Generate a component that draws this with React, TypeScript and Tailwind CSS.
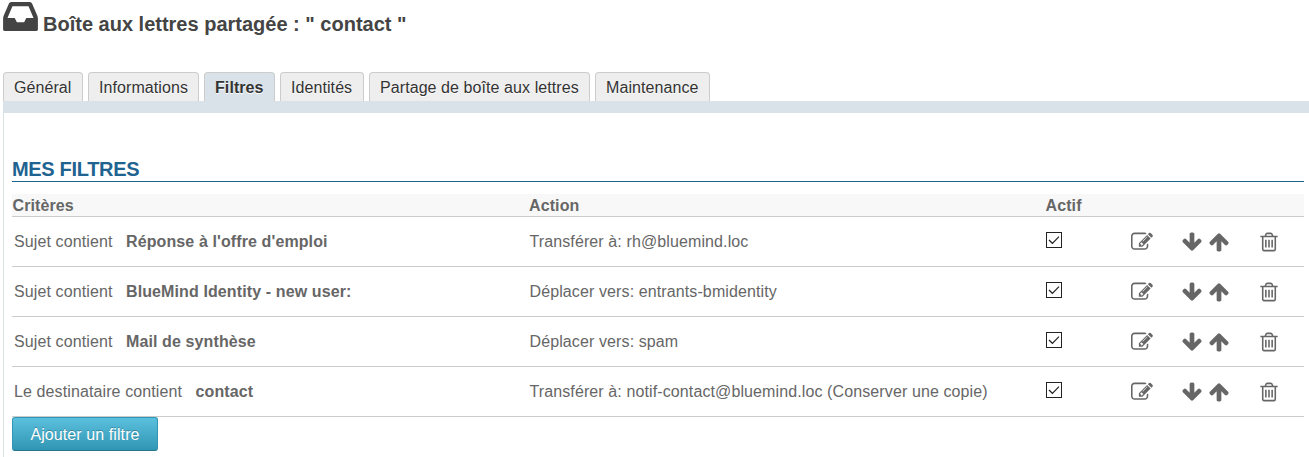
const PATHS = {
  edit: 'M888 1184l116-116-152-152-116 116v56h96v96h56zm440-720q-16-16-33 1l-350 350q-17 17-1 33t33-1l350-350q17-17 1-33zm80 594v190q0 119-84.5 203.5t-203.5 84.5h-832q-119 0-203.5-84.5t-84.5-203.5v-832q0-119 84.5-203.5t203.5-84.5h832q63 0 117 25 15 7 18 23 3 17-9 29l-49 49q-14 14-32 8-23-6-45-6h-832q-66 0-113 47t-47 113v832q0 66 47 113t113 47h832q66 0 113-47t47-113v-126q0-13 9-22l64-64q15-15 35-7t20 29zm-96-738l288 288-672 672h-288v-288zm444 132l-92 92-288-288 92-92q28-28 68-28t68 28l152 152q28 28 28 68t-28 68z',
  arrow: 'M1675 971q0 51-37 90l-75 75q-38 38-91 38-54 0-90-38l-294-293v704q0 52-37.5 84.5t-90.5 32.5h-128q-53 0-90.5-32.5t-37.5-84.5v-704l-294 293q-36 38-90 38t-90-38l-75-75q-38-38-38-90 0-53 38-91l651-651q35-37 90-37 54 0 91 37l651 651q37 39 37 91z',
  trash: 'M704 736v576q0 14-9 23t-23 9h-64q-14 0-23-9t-9-23v-576q0-14 9-23t23-9h64q14 0 23 9t9 23zm256 0v576q0 14-9 23t-23 9h-64q-14 0-23-9t-9-23v-576q0-14 9-23t23-9h64q14 0 23 9t9 23zm256 0v576q0 14-9 23t-23 9h-64q-14 0-23-9t-9-23v-576q0-14 9-23t23-9h64q14 0 23 9t9 23zm128 724v-948h-896v948q0 22 7 40.5t14.5 27 10.5 8.5h832q3 0 10.5-8.5t14.5-27 7-40.5zm-672-1076h448l-48-117q-7-9-17-11h-317q-10 2-17 11zm928 32v64q0 14-9 23t-23 9h-96v948q0 83-47 143.5t-113 60.5h-832q-66 0-113-58.5t-47-141.5v-952h-96q-14 0-23-9t-9-23v-64q0-14 9-23t23-9h309l70-167q15-37 54-63t79-26h320q40 0 79 26t54 63l70 167h309q14 0 23 9t9 23z',
  inbox: 'M1023 832h316q-1-3-2.5-8.5t-2.5-8.5l-212-496h-708l-212 496q-1 3-2.5 8.5t-2.5 8.5h316l95 192h320zm513 30v482q0 26-19 45t-45 19h-1408q-26 0-45-19t-19-45v-482q0-62 25-123l238-552q10-25 36.5-42t52.5-17h832q26 0 52.5 17t36.5 42l238 552q25 61 25 123z',
};

function Icon({ path, className }: { path: string; className: string }) {
  return (
    <svg viewBox="0 0 1792 1792" fill="currentColor" className={`size-[22px] shrink-0 ${className}`}>
      <path d={path} />
    </svg>
  );
}

const TABS = [
  { label: 'Général', width: 'w-[80px]' },
  { label: 'Informations', width: 'w-[111px]' },
  { label: 'Filtres', width: 'w-[71px]' },
  { label: 'Identités', width: 'w-[84px]' },
  { label: 'Partage de boîte aux lettres', width: 'w-[221px]' },
  { label: 'Maintenance', width: 'w-[115px]' },
];

const FILTERS = [
  { field: 'Sujet contient', value: "Réponse à l'offre d'emploi", action: 'Transférer à: rh@bluemind.loc' },
  { field: 'Sujet contient', value: 'BlueMind Identity - new user:', action: 'Déplacer vers: entrants-bmidentity' },
  { field: 'Sujet contient', value: 'Mail de synthèse', action: 'Déplacer vers: spam' },
  { field: 'Le destinataire contient', value: 'contact', action: 'Transférer à: notif-contact@bluemind.loc (Conserver une copie)' },
];

export default function App() {
  return (
    <div className="h-[457px] overflow-hidden bg-white pl-[3px] font-['Liberation_Sans',Arial,sans-serif] text-base text-[#666]">
      <header className="flex h-[72px] text-[#444]">
        <svg viewBox="0 128 1536 1280" fill="currentColor" className="mt-[2px] h-[29px] w-[35px]">
          <path d={PATHS.inbox} />
        </svg>
        <h1 className="ml-[5px] mt-[9px] text-[20px] leading-[30px] font-bold whitespace-pre">Boîte aux lettres partagée : " contact "</h1>
      </header>

      <nav className="flex h-[29px] gap-[5px]">
        {TABS.map(({ label, width }) => (
          <button
            key={label}
            className={`h-[29px] rounded-t border border-b-0 border-[#ccc] pt-px pl-[10px] text-left leading-[28px] tracking-[0.08px] whitespace-nowrap text-[#333] [text-shadow:0_1px_0_#fff] ${width} ${
              label === 'Filtres' ? 'bg-[#d9e2e9] font-bold' : 'bg-[#eee]'
            }`}
          >
            {label}
          </button>
        ))}
      </nav>
      <div className="h-3 bg-[#d9e2e9]" />

      <main className="h-[344px] border-l border-[#d9e2e2] pt-[43px] pr-[5px] pl-2">
        <h2 className="h-[26px] border-b border-[#1f6391] text-[20px] leading-[26px] font-bold tracking-[-0.32px] text-[#1f6391]">MES FILTRES</h2>
        <div className="mt-3 grid h-[23px] grid-cols-[516.5px_516.5px_1fr] border-b border-[#ccc] bg-[#f8f8f8] pl-[0.5px] leading-[23px] font-bold tracking-[0.1px]">
          <span>Critères</span>
          <span>Action</span>
          <span>Actif</span>
        </div>
        {FILTERS.map((filter) => (
          <div key={filter.value} className="grid h-[50px] grid-cols-[515.5px_516.5px_1fr] items-center border-b border-[#ccc] pl-[2px] tracking-[0.11px]">
            <div className="flex gap-[13.5px] whitespace-nowrap">
              <span>{filter.field}</span>
              <b>{filter.value}</b>
            </div>
            <span className="whitespace-nowrap">{filter.action}</span>
            <div className="flex items-center">
              <span className="-mt-[3px] flex size-4 items-center justify-center border border-[#222] bg-white">
                <svg viewBox="0 0 14 14" className="size-[14px]" fill="none" stroke="#222" strokeWidth="1.2">
                  <path d="M2 7l3.4 3.3 6.6-6.6" />
                </svg>
              </span>
              <Icon path={PATHS.edit} className="ml-[69px]" />
              <Icon path={PATHS.arrow} className="ml-7 rotate-180" />
              <Icon path={PATHS.arrow} className="ml-[4.5px]" />
              <Icon path={PATHS.trash} className="ml-[28.5px]" />
            </div>
          </div>
        ))}
        <button className="h-[34px] w-[146px] rounded-[3px] border border-[#2f96b4] border-b-[#24748c] bg-linear-to-b from-[#5bc0de] to-[#2f96b4] pt-[2px] tracking-[0.09px] text-white [text-shadow:0_-1px_0_rgba(0,0,0,0.25)]">
          Ajouter un filtre
        </button>
      </main>
    </div>
  );
}
